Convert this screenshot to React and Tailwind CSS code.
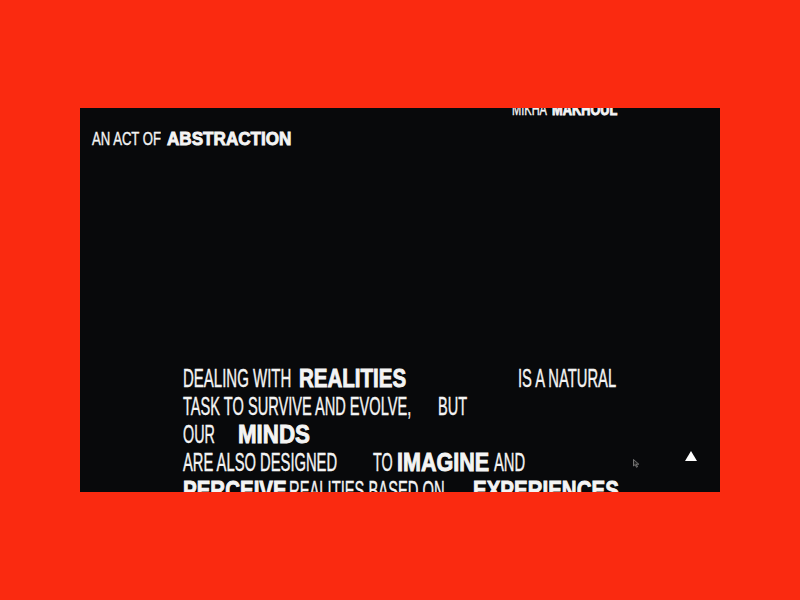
function Seg({ w = '', s, b, children }) {
  return (
    <span className={`inline-block whitespace-nowrap ${w}`}>
      <span
        className={`inline-block origin-left ${s} ${
          b
            ? 'font-bold [-webkit-text-stroke:0.9px_currentColor]'
            : 'font-normal [-webkit-text-stroke:0.4px_currentColor]'
        }`}
      >
        {children}
      </span>
    </span>
  )
}

export default function App() {
  return (
    <div className="w-[800px] h-[600px] bg-[#fa2a10] pt-[108px] pl-[80px] font-['Liberation_Sans',Arial,sans-serif] text-[#f4f4f4]">
      <div className="relative w-[640px] h-[384px] bg-[#08090b] overflow-hidden">
        {/* author, mostly scrolled out of view */}
        <div className="-mt-[6px] h-[16px] pl-[432px] text-[16px] leading-[16px] flex">
          <Seg w="w-[40px]" s="scale-x-[0.69]">MIKHA</Seg>
          <Seg s="scale-x-[0.8]" b>MAKHOUL</Seg>
        </div>

        <div className="mt-[11px] pl-[12px] h-[20px] text-[19px] leading-[20px] flex">
          <Seg w="w-[75px]" s="scale-x-[0.69]">AN ACT OF</Seg>
          <Seg s="scale-x-[0.9]" b>ABSTRACTION</Seg>
        </div>

        <div className="mt-[215px] pl-[103px] text-[25px] leading-[28px]">
          <div className="flex h-[28px]">
            <Seg w="w-[116px]" s="scale-x-[0.6]">DEALING WITH</Seg>
            <Seg w="w-[219px]" s="scale-x-[0.82]" b>REALITIES</Seg>
            <Seg s="scale-x-[0.59]">IS A NATURAL</Seg>
          </div>
          <div className="flex h-[28px]">
            <Seg w="w-[255px]" s="scale-x-[0.584]">TASK TO SURVIVE AND EVOLVE,</Seg>
            <Seg s="scale-x-[0.582]">BUT</Seg>
          </div>
          <div className="flex h-[28px]">
            <Seg w="w-[55px]" s="scale-x-[0.574]">OUR</Seg>
            <Seg s="scale-x-[0.894]" b>MINDS</Seg>
          </div>
          <div className="flex h-[28px]">
            <Seg w="w-[190px]" s="scale-x-[0.59]">ARE ALSO DESIGNED</Seg>
            <Seg w="w-[24px]" s="scale-x-[0.574]">TO</Seg>
            <Seg w="w-[97px]" s="scale-x-[0.861]" b>IMAGINE</Seg>
            <Seg s="scale-x-[0.59]">AND</Seg>
          </div>
          <div className="flex h-[28px]">
            <Seg w="w-[106px]" s="scale-x-[0.82]" b>PERCEIVE</Seg>
            <Seg w="w-[184px]" s="scale-x-[0.59]">REALITIES BASED ON</Seg>
            <Seg s="scale-x-[0.82]" b>EXPERIENCES</Seg>
          </div>
        </div>

        {/* cursor */}
        <svg className="absolute left-[553px] top-[351px]" width="7" height="9" viewBox="0 0 7 9">
          <path d="M0.5 0.5 L0.5 7 L2.2 5.5 L3.5 8.3 L4.5 7.8 L3.3 5.2 L5.8 5.2 Z" fill="#222" stroke="#8a8a8a" strokeWidth="0.8" />
        </svg>

        {/* back to top */}
        <button className="absolute left-[605px] top-[343px]">
          <svg width="12" height="10" viewBox="0 0 12 10" className="block">
            <polygon points="6,0 12,10 0,10" fill="#ffffff" />
          </svg>
        </button>
      </div>
    </div>
  )
}
